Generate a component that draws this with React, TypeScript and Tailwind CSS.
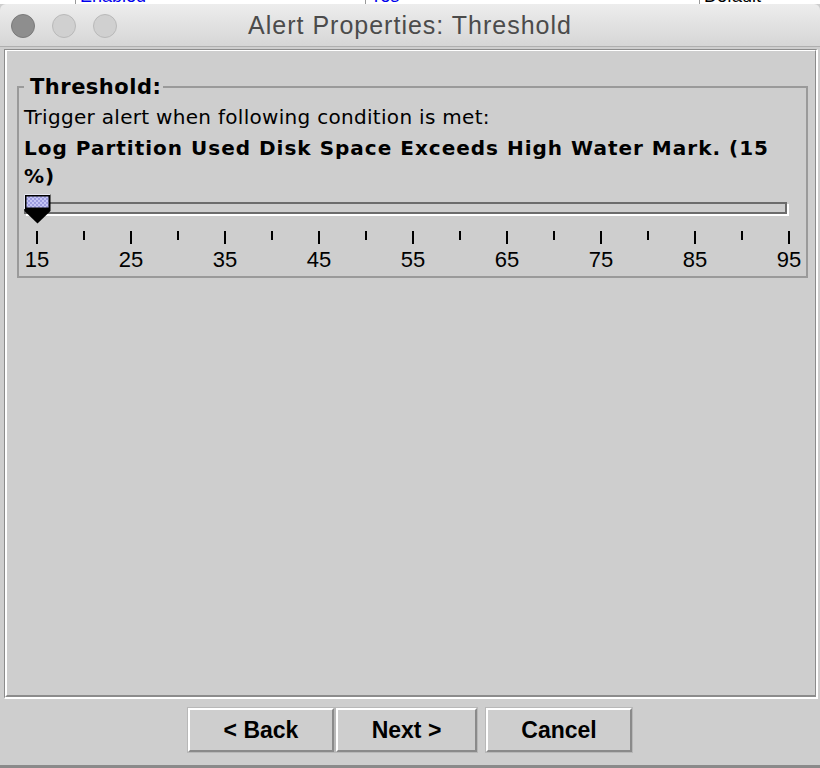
import React from "react";

const majorLabels = [15, 25, 35, 45, 55, 65, 75, 85, 95];

function Thumb() {
  return (
    <svg width="27" height="30" viewBox="0 0 27 30">
      <defs>
        <pattern id="chk" width="4" height="4" patternUnits="userSpaceOnUse">
          <rect width="4" height="4" fill="#9c9ce0" />
          <rect width="2" height="2" fill="#c4c4f4" />
          <rect x="2" y="2" width="2" height="2" fill="#c4c4f4" />
        </pattern>
      </defs>
      <path d="M0.5 0.5 H26.5 V17 L13.5 29.5 L0.5 17 Z" fill="#000" />
      <rect x="2.5" y="2.5" width="22" height="11" fill="url(#chk)" />
      <path d="M0.5 15 V0.5 H26" stroke="#e8e8f4" strokeWidth="1" fill="none" />
    </svg>
  );
}

function Btn({ label }: { label: string }) {
  return (
    <button
      className="h-[44px] border-t-2 border-l-2 border-b-2 border-r-2 border-t-white border-l-white border-b-[#8a8a8a] border-r-[#8a8a8a] bg-[#cecece] text-[23px] font-bold text-black outline outline-1 outline-[#b8b8b8]"
      style={{ fontFamily: '"Liberation Sans", Arial, sans-serif' }}
    >
      {label}
    </button>
  );
}

export default function App() {
  const ticks = Array.from({ length: 17 }, (_, i) => i);
  return (
    <div
      className="w-[820px] h-[768px] bg-[#cecece] overflow-hidden flex flex-col"
      style={{ fontFamily: '"DejaVu Sans", "Liberation Sans", sans-serif' }}
    >
      {/* background window strip */}
      <div className="h-[4px] bg-white overflow-hidden flex text-[18px] leading-[20px]" style={{ fontFamily: '"Liberation Sans", sans-serif' }}>
        <div className="w-[76px] border-r border-[#999] -mt-[14px]" />
        <div className="w-[290px] border-r border-[#999] -mt-[14px] pl-[4px] text-[#0000ee]">Enabled</div>
        <div className="w-[334px] border-r border-[#999] -mt-[14px] pl-[4px] text-[#0000ee]">Yes</div>
        <div className="flex-1 -mt-[14px] pl-[4px] text-black">Default</div>
      </div>

      {/* title bar */}
      <div className="h-[43px] rounded-t-[6px] bg-gradient-to-b from-[#ededed] to-[#d6d6d6] border-b border-[#afafaf] relative flex items-center justify-center">
        <div className="absolute left-[11px] top-[10px] flex gap-[17px]">
          <div className="w-[24px] h-[24px] rounded-full bg-[#8e8e8e] border border-[#7a7a7a]" />
          <div className="w-[24px] h-[24px] rounded-full bg-[#d0d0d0] border border-[#b9b9b9]" />
          <div className="w-[24px] h-[24px] rounded-full bg-[#d0d0d0] border border-[#b9b9b9]" />
        </div>
        <span
          className="text-[25px] text-[#4b4b4b] tracking-[1px] mt-[2px]"
          style={{ fontFamily: '"Liberation Sans", Arial, sans-serif' }}
        >
          Alert Properties: Threshold
        </span>
      </div>

      {/* content */}
      <div className="mt-[2px] ml-[4px] mr-[2px] h-[650px] border-t border-l border-[#8c8c8c] border-b-2 border-r-2 border-b-white border-r-white">
        <div className="h-full border-t border-l-2 border-t-white border-l-white border-b-2 border-r border-b-[#8c8c8c] border-r-[#8c8c8c] pt-[24px]">
          <fieldset className="ml-[10px] w-[791px] border-2 border-[#9a9a9a] pb-[4px]">
            <legend className="ml-[5px] pl-[6px] pr-[2px] text-[21px] font-bold leading-[24px] tracking-[0.5px] text-black">
              Threshold:
            </legend>
            <div className="pl-[5px] pt-[4px] text-[20px] leading-[29px] text-black">
              <div className="tracking-[0.3px]">Trigger alert when following condition is met:</div>
              <div className="font-bold tracking-[1px] mt-[2px] mb-[-1px]">
                Log Partition Used Disk Space Exceeds High Water Mark. (15
              </div>
              <div className="font-bold tracking-[1px]">%)</div>
            </div>

            {/* slider */}
            <div className="mt-[3px] ml-[5px] w-[765px] h-[30px] relative">
              <div className="absolute left-0 top-[8px] w-[763px] h-[12px] border-2 border-[#6c6c6c] shadow-[2px_2px_0_0_#ffffff]" />
              <div className="absolute left-0 top-0">
                <Thumb />
              </div>
            </div>

            {/* ticks */}
            <div className="mt-[7px] ml-[17px] w-[754px] h-[13px] flex justify-between items-start">
              {ticks.map((t) => (
                <div key={t} className={t % 2 === 0 ? "w-[2px] h-[13px] bg-black" : "w-[2px] h-[9px] bg-black"} />
              ))}
            </div>

            {/* labels */}
            <div
              className="mt-[4px] ml-[1px] w-[786px] flex justify-between text-[22px] leading-[24px] text-black"
              style={{ fontFamily: '"Liberation Sans", Arial, sans-serif' }}
            >
              {majorLabels.map((l) => (
                <div key={l} className="w-[34px] text-center">
                  {l}
                </div>
              ))}
            </div>
          </fieldset>
        </div>
      </div>

      {/* buttons */}
      <div className="h-[66px] pt-[9px] flex justify-center">
        <div className="flex">
          <div className="w-[146px] flex flex-col"><Btn label="< Back" /></div>
          <div className="w-[141px] ml-[2px] flex flex-col"><Btn label="Next >" /></div>
          <div className="w-[146px] ml-[9px] flex flex-col"><Btn label="Cancel" /></div>
        </div>
      </div>
      <div className="h-[3px] bg-[#8a8a8a]" />
    </div>
  );
}
